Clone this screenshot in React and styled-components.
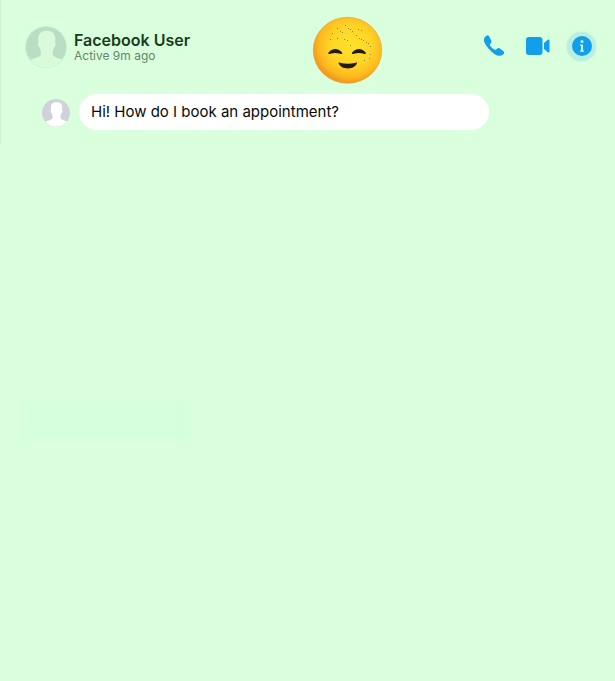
import React from "react";
import styled, { createGlobalStyle } from "styled-components";

const GlobalStyle = createGlobalStyle`
  * { box-sizing: border-box; }
  body { margin: 0; background: #daffdc; font-family: Inter, "Liberation Sans", sans-serif; }
`;

const Chat = styled.main`
  display: flex;
  flex-direction: column;
  width: 615px;
  height: 681px;
  overflow: hidden;
  background: linear-gradient(#cdf2d0, #cdf2d0) 0 0 / 1px 144px no-repeat, #daffdc;
`;

const Header = styled.header`
  display: flex;
  align-items: flex-start;
  height: 94px;
  padding: 16px 18px 0 25px;
`;

const AvatarFrame = styled.svg`
  display: block;
  flex: none;
  width: ${(p) => p.$size}px;
  height: ${(p) => p.$size}px;
  margin-top: ${(p) => p.$top || 0}px;
`;

const Identity = styled.div`
  width: 245px;
  padding: 15px 0 0 7px;
`;

const Name = styled.h1`
  margin: 0;
  font-size: 16px;
  line-height: 18px;
  font-weight: 600;
  color: #173d20;
  white-space: nowrap;
`;

const Status = styled.p`
  margin: 0;
  font-size: 12px;
  line-height: 14px;
  color: #66856c;
  white-space: nowrap;
`;

const Emoji = styled.svg`
  display: block;
  flex: none;
  width: 71px;
  height: 69px;
`;

const Actions = styled.nav`
  display: flex;
  align-items: center;
  height: 30px;
  margin: 15px 0 0 auto;
`;

const Action = styled.button`
  display: flex;
  flex: none;
  padding: 0;
  margin-right: ${(p) => p.$gap || 0}px;
  border: 0;
  background: none;
  color: #119eea;
`;

const InfoAction = styled(Action)`
  align-items: center;
  justify-content: center;
  width: 29px;
  height: 29px;
  margin-right: 1px;
  border-radius: 50%;
  background: #b9eee2;
  box-shadow: 0 0 3px #b9eee2;
`;

const MessageRow = styled.section`
  display: flex;
  align-items: center;
  gap: 9px;
  padding-left: 42px;
  height: 36px;
`;

const Bubble = styled.p`
  width: 410px;
  height: 36px;
  margin: 0;
  padding-left: 12px;
  border-radius: 18px;
  background: #fff;
  color: #080a09;
  font-size: 15px;
  line-height: 36px;
  white-space: nowrap;
`;

const PendingReply = styled.div`
  width: 170px;
  height: 40px;
  margin: 270px 0 0 20px;
  background: #d5ffdd;
`;

function Avatar({ id, size, top, fill, person, ring }) {
  return (
    <AvatarFrame viewBox="0 0 42 42" $size={size} $top={top} aria-hidden="true">
      <clipPath id={id}>
        <circle cx="21" cy="21" r="20.5" />
      </clipPath>
      <circle cx="21" cy="21" r="21" fill={ring} />
      <g clipPath={`url(#${id})`}>
        <circle cx="21" cy="21" r="20" fill={fill} />
        <path
          d="M21.8 4.8c-5.7 0-8.6 3-8.5 7.9l.2 3.4c-1 .8-.5 4.3 1 5.2l1.4 4.7v2.5c-.6 3.1-8.1 3.6-13.4 7V44h38v-8.5c-4.9-3.4-12.2-3.9-12.8-7V26l1.4-4.7c1.5-.9 2-4.4 1-5.2l.2-3.4c.1-4.9-2.8-7.9-8.5-7.9Z"
          fill={person}
        />
      </g>
    </AvatarFrame>
  );
}

const SPARKS = [
  [33, 9], [36, 12], [38, 13], [40, 15], [46, 13], [49, 14], [20, 17], [25, 12],
  [28, 15], [30, 16], [18, 23], [25, 22], [32, 23], [35, 24], [38, 29],
  [44, 19], [47, 22], [49, 23], [51, 24], [54, 26], [56, 27], [58, 30],
  [58, 38], [57, 42], [52, 44],
];

export default function App() {
  return (
    <>
      <GlobalStyle />
      <Chat>
        <Header>
          <Avatar id="header-avatar" size={42} top={10} fill="#b9dec4" person="#d9fadb" ring="#caeecf" />
          <Identity>
            <Name>Facebook User</Name>
            <Status>Active 9m ago</Status>
          </Identity>
          <Emoji viewBox="0 0 71 69" role="img" aria-label="Smiling face">
            <defs>
              <radialGradient id="face" cx="55%" cy="43%" r="56%">
                <stop offset="0" stopColor="#ffe22b" />
                <stop offset=".55" stopColor="#ffd425" />
                <stop offset=".84" stopColor="#fdb91e" />
                <stop offset="1" stopColor="#f29a1b" />
              </radialGradient>
            </defs>
            <ellipse cx="35.5" cy="34.3" rx="34.2" ry="33" fill="url(#face)" stroke="#e4a136" strokeWidth=".7" />
            <g fill="#778c54">
              {SPARKS.map(([x, y]) => (
                <rect key={`${x}-${y}`} x={x} y={y} width="1" height="1" />
              ))}
            </g>
            <g fill="#211b0d">
              <path d="M16.5 37.9c-.9-.5 2-4.8 6.8-4.8s7.7 4.3 6.8 4.8c-.8.5-3-1-6.8-1s-6 1.5-6.8 1Z" />
              <path d="M40.1 37.9c-.9-.5 2-4.8 6.8-4.8s7.7 4.3 6.8 4.8c-.8.5-3-1-6.8-1s-6 1.5-6.8 1Z" />
              <path d="M26.7 47.6c-.4-.9.3-1.3 1.2-.9 5 1.4 11 1.4 15.8 0 .9-.4 1.6 0 1.2.9-1.2 3-4.5 4.9-9.1 4.9s-7.9-1.9-9.1-4.9Z" />
            </g>
          </Emoji>
          <Actions aria-label="Chat actions">
            <Action aria-label="Call" $gap={21}>
              <svg width="22" height="22" viewBox="0 0 22 22" fill="currentColor">
                <path d="M3.2.9 2 2C-.2 4.2.8 8.2 5.4 13.4c5.2 5.8 10.5 9 14 6.7l1.2-1.1c.9-.9.8-2-.1-2.8l-3.7-2.7c-.9-.6-2-.5-2.8.2l-1 .9c-.5.4-1.1.4-1.7 0-1.8-1.2-3.1-2.5-4.2-4.2-.4-.6-.3-1.1.1-1.6l.7-.8c.7-.8.8-1.7.3-2.6L6.1 1.3C5.5.2 4.2-.1 3.2.9Z" />
              </svg>
            </Action>
            <Action aria-label="Video call" $gap={17}>
              <svg width="24" height="18" viewBox="0 0 24 18" fill="currentColor">
                <rect width="16.5" height="18" rx="3" />
                <path d="m18 6.1 3.8-3.3c.8-.7 1.7-.4 1.7.7v11c0 1.1-.9 1.4-1.7.7L18 11.9Z" />
              </svg>
            </Action>
            <InfoAction aria-label="Information">
              <svg width="20" height="20" viewBox="0 0 20 20">
                <circle cx="10" cy="10" r="10" fill="currentColor" />
                <circle cx="10" cy="5.6" r="1.5" fill="#c8f5e7" />
                <path d="M8 8.6h3v6h1v1.2H8v-1.2h1V10H8Z" fill="#c8f5e7" />
              </svg>
            </InfoAction>
          </Actions>
        </Header>
        <MessageRow>
          <Avatar id="message-avatar" size={28} top={2} fill="#d0d1db" person="#fff" ring="#d0d5db" />
          <Bubble>Hi! How do I book an appointment?</Bubble>
        </MessageRow>
        <PendingReply />
      </Chat>
    </>
  );
}
